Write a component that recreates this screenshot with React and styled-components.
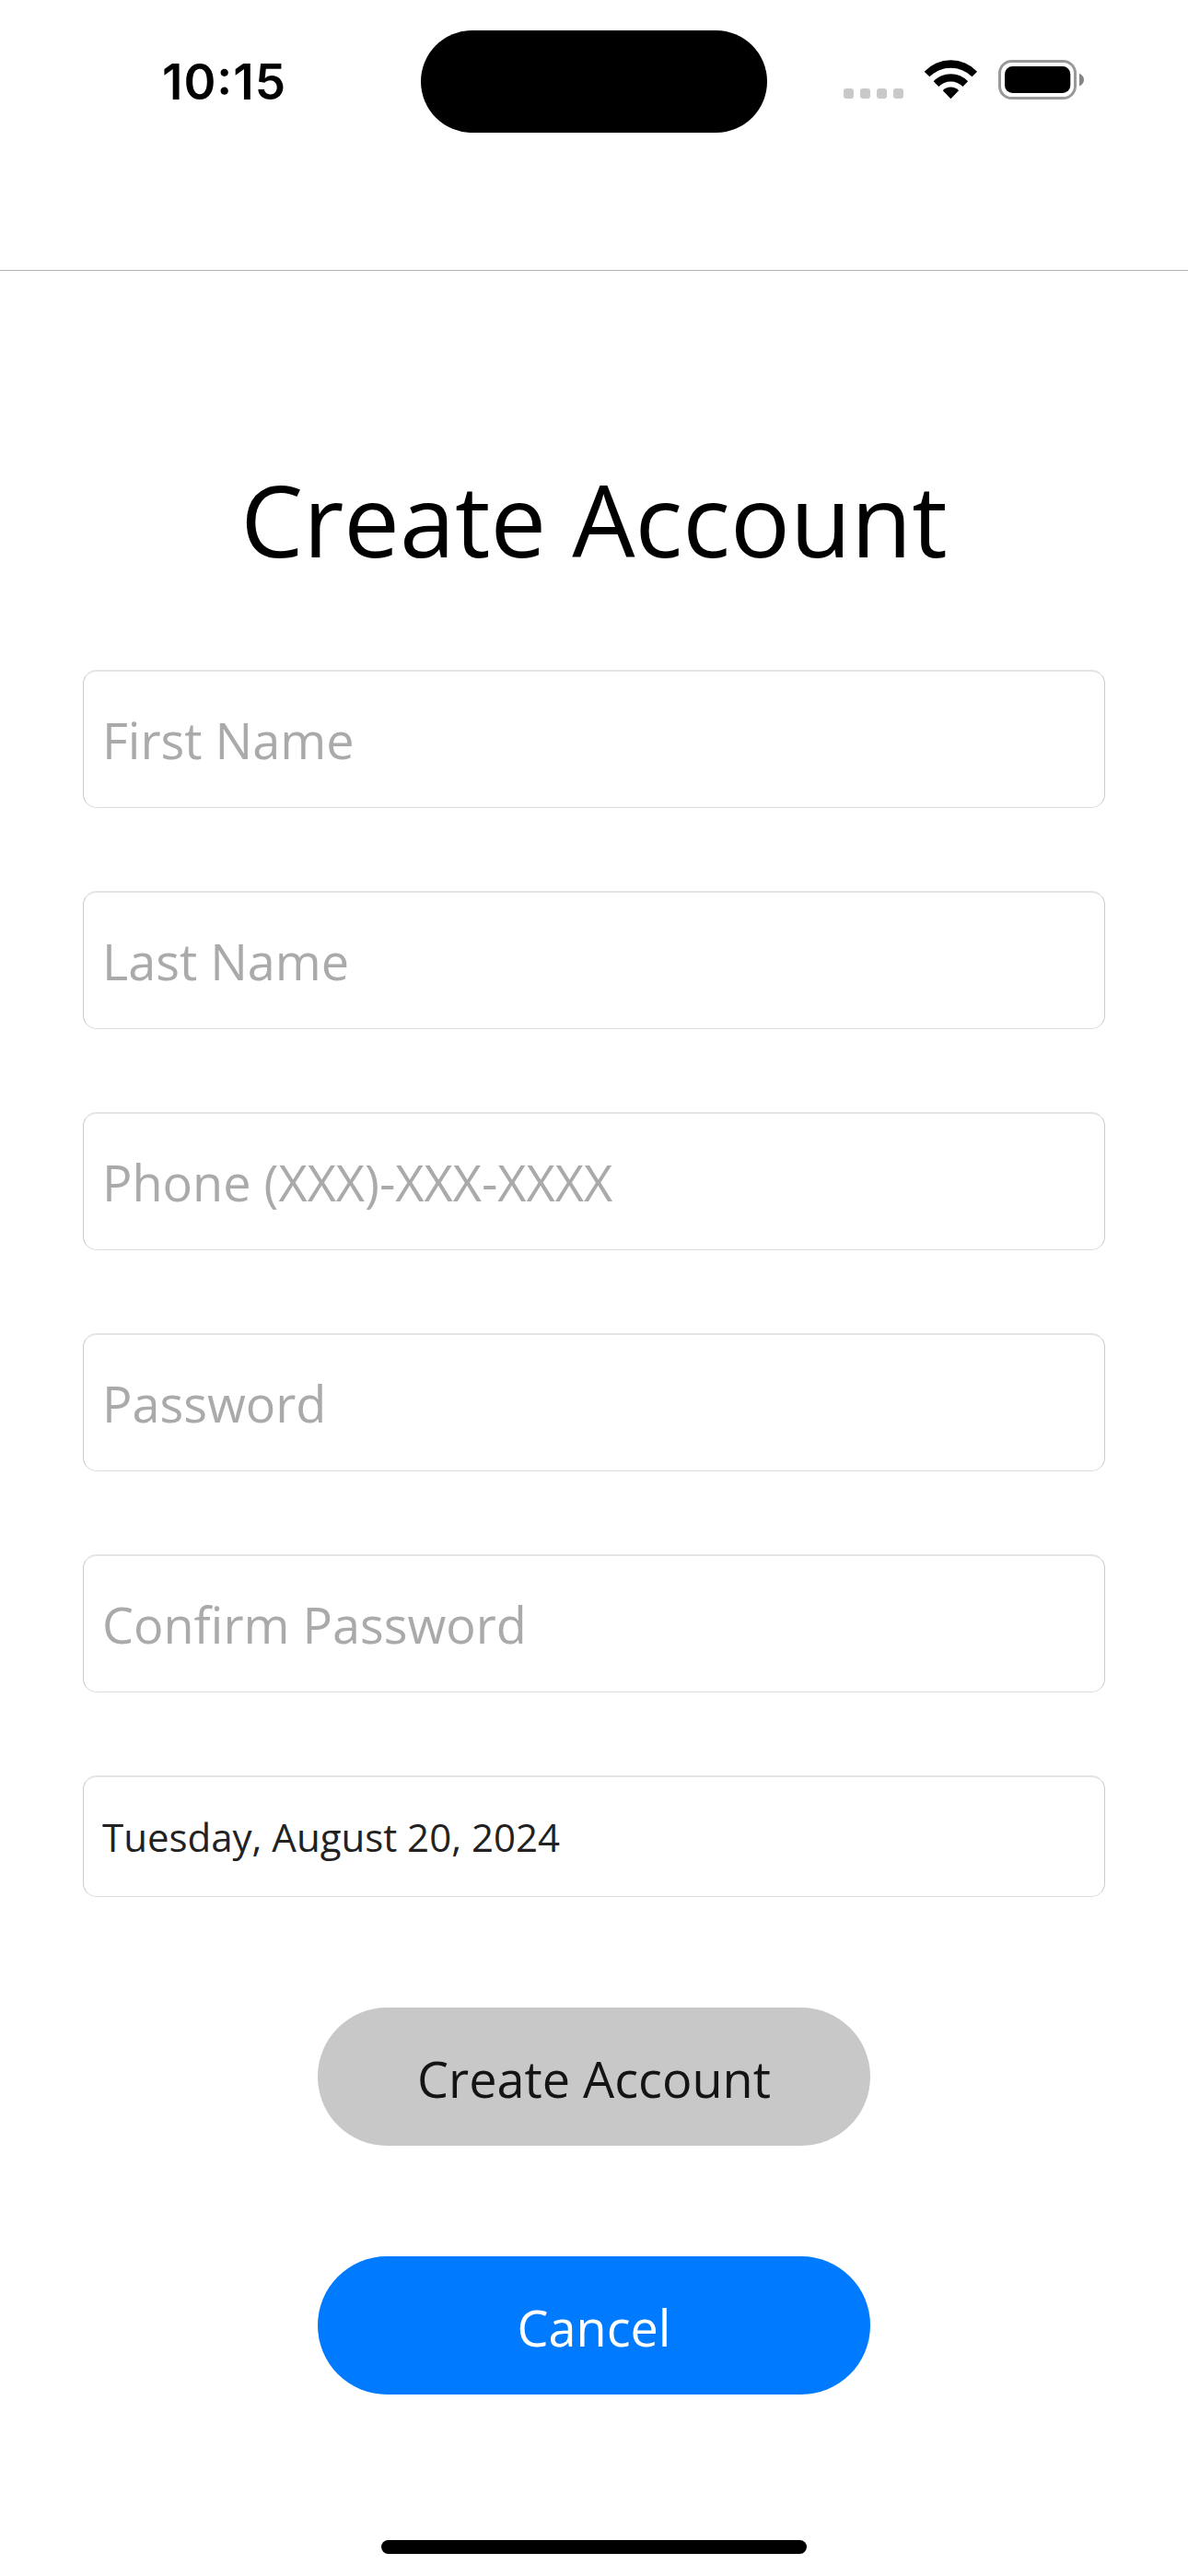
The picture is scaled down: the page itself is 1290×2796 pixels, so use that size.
import React from 'react';
import styled, { createGlobalStyle } from 'styled-components';

const Global = createGlobalStyle`
  * { box-sizing: border-box; }
  body { margin: 0; background: #fff; font-family: "Open Sans", sans-serif; }
`;
const Screen = styled.div`
  width: 1290px; height: 2796px; display: flex; flex-direction: column; background: #fff; overflow: hidden;
`;
const Header = styled.header`
  height: 294px; flex: none; border-bottom: 1px solid #b2b2b2; padding-top: 33px;
`;
const StatusBar = styled.div`
  height: 111px; display: grid; grid-template-columns: 457px 376px 457px; align-items: center;
`;
const Time = styled.div`
  padding-left: 176px; font: 600 53px/60px Inter, sans-serif; letter-spacing: 1px; color: #000;
  font-feature-settings: "case" 1;
`;
const Island = styled.div`
  height: 111px; border-radius: 56px; background: #000;
`;
const Status = styled.div`
  padding-left: 82px; height: 111px; display: flex;
`;
const Form = styled.form`
  flex: none; padding: 195px 90px 0; display: flex; flex-direction: column; align-items: center;
`;
const Title = styled.h1`
  margin: 0 0 88px; height: 150px; font-size: 108px; line-height: 150px; font-weight: 400; color: #000; white-space: nowrap;
`;
const Field = styled.input`
  width: 1110px; height: ${p => p.$h || 150}px; margin: 0 0 90px; padding: ${p => p.$h ? '0 20px 1px' : '1px 20px 0'}; flex: none;
  border-style: solid; border-width: 2px 1px 1px; border-color: #e4e4e4 #ccc #dcdcdc; border-radius: 15px;
  background: #fff; outline: none;
  font: 400 ${p => p.$size || 54}px "Open Sans", sans-serif; color: #222;
  &::placeholder { color: #aaa; opacity: 1; }
`;
const Button = styled.button`
  width: 600px; height: 150px; margin: 30px 0 90px; padding: 3px 0 0; flex: none; border: 0; border-radius: 75px;
  background: ${p => p.$bg}; color: ${p => p.$fg}; font: 400 54px "Open Sans", sans-serif;
`;
const HomeBar = styled.div`
  width: 462px; height: 15px; border-radius: 8px; background: #000; margin: auto auto 24px;
`;

export default function App() {
  return (
    <Screen>
      <Global />
      <Header>
        <StatusBar>
          <Time>10:15</Time>
          <Island />
          <Status>
            <svg width="265" height="111" viewBox="915 33 265 111">
              <g fill="#c9c9c9">{[916, 934, 952, 970].map(x => <rect key={x} x={x} y="96" width="11" height="11" rx="3" />)}</g>
              <path d="M1003.7 77.7A39.5 39.5 0 0 1 1061.1 77.7L1055.5 83.3A33 33 0 0 0 1009.3 83.3Z" />
              <path d="M1013.7 88.3A25.5 25.5 0 0 1 1051.1 88.3L1045.5 94A18.5 18.5 0 0 0 1019.3 94Z" />
              <path d="M1023.7 98.3A12 12 0 0 1 1041.1 98.3L1032.4 107.2Z" />
              <rect x="1085.5" y="66.5" width="82" height="40" rx="13" fill="none" stroke="#999" strokeWidth="3" />
              <rect x="1091" y="72" width="71.3" height="29" rx="8.5" />
              <path d="M1172 79.7C1178.7 82.5 1178.7 90.7 1172 93.5Z" fill="#858585" />
            </svg>
          </Status>
        </StatusBar>
      </Header>
      <Form>
        <Title>Create Account</Title>
        <Field placeholder="First Name" />
        <Field placeholder="Last Name" />
        <Field placeholder="Phone (XXX)-XXX-XXXX" />
        <Field type="password" placeholder="Password" />
        <Field type="password" placeholder="Confirm Password" />
        <Field $h={132} $size={42} defaultValue="Tuesday, August 20, 2024" />
        <Button type="button" $bg="#c8c8c8" $fg="#141414">Create Account</Button>
        <Button type="button" $bg="#007aff" $fg="#fff">Cancel</Button>
      </Form>
      <HomeBar />
    </Screen>
  );
}
